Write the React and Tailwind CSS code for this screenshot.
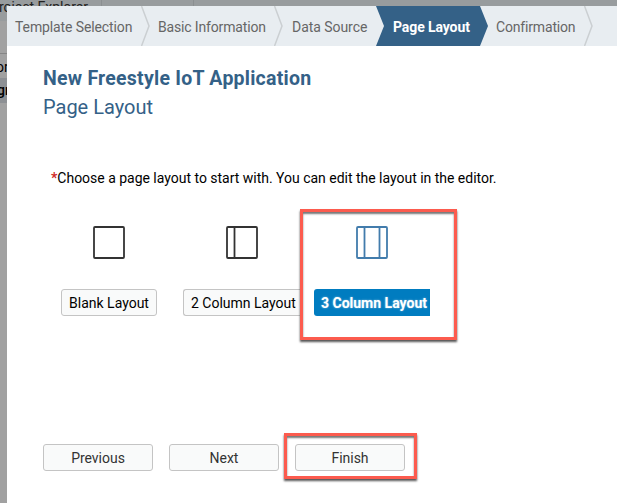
const steps = [
  { label: "Template Selection", box: "w-[134px] pl-[8px]", text: "tracking-[-0.11px]" },
  { label: "Basic Information", box: "w-[124px] pl-[8px]", text: "tracking-[-0.16px]" },
  { label: "Data Source", box: "w-[93px] pl-[9px]", text: "tracking-[-0.05px]" },
  { label: "Page Layout", box: "w-[95px] pl-[8px]", text: "tracking-[-0.1px]", active: true },
  { label: "Confirmation", box: "w-[95px] pl-[7px]", text: "tracking-[-0.17px]" },
];

function Chevron({ before, after }) {
  return (
    <svg width="9" height="40" viewBox="0 0 9 40" className="block shrink-0">
      <rect width="9" height="40" fill={after ? "#346187" : "#e8edf1"} />
      {after && <path d="M0 0L8 20L0 40Z" fill="#e8edf1" />}
      {before && <path d="M0 0L8 20L0 40Z" fill="#346187" />}
      {!before && !after && <path d="M0.5 0L8 20L0.5 40" fill="none" stroke="#cbcfd2" strokeWidth="1.5" />}
    </svg>
  );
}

function WizardBar() {
  return (
    <div className="flex h-10 bg-[#e8edf1] text-sm">
      {steps.map((s, i) => (
        <div key={s.label} className="flex shrink-0">
          <div className={`flex h-10 items-center whitespace-nowrap pb-px pt-[3px] ${s.box} ${s.active ? "bg-[#346187] font-bold text-white" : "text-[#666]"}`}>
            <span className={s.text}>{s.label}</span>
          </div>
          <Chevron before={s.active} after={steps[i + 1]?.active} />
        </div>
      ))}
    </div>
  );
}

function LayoutIcon({ lines, color }) {
  return (
    <svg width="32" height="33" viewBox="0 0 32 33" fill="none" stroke={color} strokeWidth="1.8" className="block">
      <rect x="1" y="1" width="30" height="31" rx="1" />
      {lines.map((x) => <path key={x} d={`M${x} 1V32`} />)}
    </svg>
  );
}

const nav = ["Previous", "Next", "Finish"];

function Highlight({ place }) {
  return (
    <div className={`pointer-events-none absolute border-[3px] border-[#fc5b4e] shadow-[0_2px_2px_#555,inset_0_2px_2px_#777] ${place}`} />
  );
}

export default function App() {
  return (
    <div className="relative h-[503px] w-[617px] overflow-hidden bg-[#a1a1a1] font-[Roboto,sans-serif] text-sm text-black">
      <div className="flex h-[21px] bg-[#989c9e]">
        <div className="-mt-[3px] w-[102px] shrink-0 whitespace-nowrap border-r border-[#8b8f91] text-[#222] leading-[20px]">
          <span className="-ml-px tracking-[-0.05px]">roject Explorer</span>
        </div>
        <div className="w-[92px] shrink-0 border-r border-[#8b8f91]" />
      </div>
      <div className="h-[33px] border-b border-[#858585]" />
      <div className="h-6 leading-[26px]"><span className="-ml-[4px]">or</span></div>
      <div className="h-[25px] bg-[#8d9094] font-medium leading-[25px]"><span className="-ml-[3px]">gr</span></div>

      <div className="absolute bottom-0 left-[7px] right-0 top-[6px] bg-white">
        <WizardBar />
        <div className="pl-9">
          <h1 className="mt-[20px] whitespace-nowrap text-[19.5px] font-bold leading-[26px] tracking-[0.24px] text-[#346187]">New Freestyle IoT Application</h1>
          <h2 className="mt-[2px] whitespace-nowrap text-[20px] leading-[26px] text-[#346187]">Page Layout</h2>
          <p className="ml-2 mt-[48px] whitespace-nowrap leading-5 tracking-[-0.015px]">
            <span className="font-bold text-[#d02a2a]">*</span>Choose a page layout to start with. You can edit the layout in the editor.
          </p>

          <div className="ml-[18px] mt-[38px] flex h-[91px]">
            <div className="flex w-[96px] flex-col items-center">
              <LayoutIcon lines={[]} color="#333" />
              <button className="mt-[30px] h-[27px] w-[96px] whitespace-nowrap rounded-[3px] border border-[#c4c4c4] bg-[#f9fafa]">
                <span>Blank Layout</span>
              </button>
            </div>
            <div className="ml-[26px] flex w-[117px] flex-col items-center">
              <LayoutIcon lines={[8.5]} color="#333" />
              <button className="mt-[30px] h-[27px] w-[117px] whitespace-nowrap rounded-l-[3px] border border-r-0 border-[#c4c4c4] bg-[#f9fafa] pl-[7px] text-left">
                <span>2 Column Layout</span>
              </button>
            </div>
            <div className="ml-[14px] flex w-[116px] flex-col items-center">
              <LayoutIcon lines={[8.5, 23.5]} color="#427cac" />
              <button className="mt-[30px] h-[27px] w-[116px] whitespace-nowrap rounded-l-[3px] bg-[#007cc0] pl-[7px] text-left font-bold text-white [text-shadow:0_0_2px_#ffffff90]">
                <span>3 Column Layout</span>
              </button>
            </div>
          </div>

          <div className="mt-[127px] flex gap-4">
            {nav.map((label) => (
              <button key={label} className="h-[27px] w-[110px] rounded-[3px] border border-[#c4c4c4] bg-[#f9fafa] text-[#333]">
                <span className="tracking-[-0.03px]">{label}</span>
              </button>
            ))}
          </div>
        </div>
      </div>
      <Highlight place="left-[300px] top-[209px] h-[131px] w-[157px]" />
      <Highlight place="left-[284px] top-[433px] h-[46px] w-[133px]" />
    </div>
  );
}
